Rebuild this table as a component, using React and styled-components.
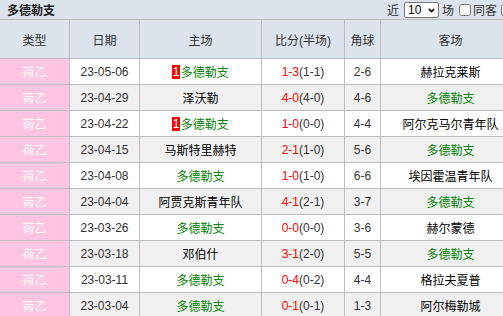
import React from 'react';
import styled, { createGlobalStyle } from 'styled-components';
import { ChevronDown } from 'lucide-react';

const GlobalStyle = createGlobalStyle`
  html, body {
    margin: 0;
    padding: 0;
    background: #fff;
    overflow: hidden;
  }
  body {
    font-family: "Liberation Sans", "Noto Sans CJK SC", sans-serif;
    font-size: 12px;
    color: #333;
  }
`;

const Wrap = styled.div`
  width: 520px;
`;

const TitleBar = styled.div`
  display: flex;
  align-items: center;
  height: 19px;
  background: #dce3ec;
  border-bottom: 1px solid #bdbdbd;
  white-space: nowrap;
`;

const Title = styled.div`
  flex: 0 0 380px;
  padding-left: 7px;
  font-weight: bold;
  font-size: 12px;
  color: #222;
`;

const Filters = styled.div`
  display: flex;
  align-items: center;
  color: #333;
`;

const Label = styled.span`
  margin-right: ${(p) => p.$gap || 0}px;
`;

const SelectBox = styled.div`
  position: relative;
  margin-right: 3px;
  height: 16px;

  svg {
    position: absolute;
    right: 3px;
    top: 4px;
    pointer-events: none;
  }
`;

const Select = styled.select`
  appearance: none;
  height: 16px;
  width: 35px;
  padding: 0 0 0 3px;
  font-family: "Liberation Sans", sans-serif;
  font-size: 12px;
  border: 1px solid #767676;
  border-radius: 2px;
  background: #fff;
  color: #000;
`;

const Check = styled.input`
  width: 12px;
  height: 12px;
  margin: 0 ${(p) => p.$gap || 0}px 0 0;
`;

const Row = styled.div`
  display: grid;
  grid-template-columns: 70px 70px 122px 83px 36px 139px;
  height: ${(p) => (p.$head ? 39 : 26)}px;
  background: ${(p) => (p.$head ? '#dce3ec' : p.$alt ? '#f0f0f0' : '#fff')};
`;

const Cell = styled.div`
  display: flex;
  align-items: center;
  justify-content: center;
  box-sizing: border-box;
  border-right: 1px solid #bdbdbd;
  border-bottom: 1px solid #bdbdbd;
  white-space: nowrap;
  overflow: hidden;
  color: ${(p) => p.$color || '#333'};

  &:last-child {
    border-right: none;
  }
`;

const TypeCell = styled(Cell)`
  background: #ffc4e1;
  color: #fff;
`;

const Rank = styled.span`
  display: inline-block;
  background: #f00;
  color: #fff;
  line-height: 14px;
  padding: 0 0.5px;
  margin-right: 1px;
`;

const Red = styled.span`
  color: #f00;
`;

const TEAM = '多德勒支';

const matches = [
  ['23-05-06', TEAM, '1-3', '1-1', '2-6', '赫拉克莱斯', 1],
  ['23-04-29', '泽沃勒', '4-0', '4-0', '4-6', TEAM],
  ['23-04-22', TEAM, '1-0', '0-0', '4-4', '阿尔克马尔青年队', 1],
  ['23-04-15', '马斯特里赫特', '2-1', '1-0', '5-6', TEAM],
  ['23-04-08', TEAM, '1-0', '1-0', '6-6', '埃因霍温青年队'],
  ['23-04-04', '阿贾克斯青年队', '4-1', '2-1', '3-7', TEAM],
  ['23-03-26', TEAM, '0-0', '0-0', '3-6', '赫尔蒙德'],
  ['23-03-18', '邓伯什', '3-1', '2-0', '5-5', TEAM],
  ['23-03-11', TEAM, '0-4', '0-2', '4-4', '格拉夫夏普'],
  ['23-03-04', TEAM, '0-1', '0-1', '1-3', '阿尔梅勒城'],
];

const teamColor = (name) => (name === TEAM ? '#008000' : '#000');

export default function App() {
  return (
    <Wrap>
      <GlobalStyle />
      <TitleBar>
        <Title>{TEAM}</Title>
        <Filters>
          <Label $gap={5}>近</Label>
          <SelectBox>
            <Select defaultValue="10">
              <option value="6">6</option>
              <option value="10">10</option>
              <option value="20">20</option>
            </Select>
            <ChevronDown size={9} strokeWidth={4} color="#000" />
          </SelectBox>
          <Label $gap={5}>场</Label>
          <Check type="checkbox" $gap={2} />
          <Label $gap={4}>同客</Label>
          <Check type="checkbox" />
        </Filters>
      </TitleBar>
      <Row $head>
        <Cell>类型</Cell>
        <Cell>日期</Cell>
        <Cell>主场</Cell>
        <Cell>比分(半场)</Cell>
        <Cell>角球</Cell>
        <Cell>客场</Cell>
      </Row>
      {matches.map(([date, home, score, half, corner, away, rank], i) => (
        <Row key={date} $alt={i % 2 === 1}>
          <TypeCell>荷乙</TypeCell>
          <Cell>{date}</Cell>
          <Cell $color={teamColor(home)}>
            {rank && <Rank>{rank}</Rank>}
            {home}
          </Cell>
          <Cell>
            <Red>{score}</Red>({half})
          </Cell>
          <Cell>{corner}</Cell>
          <Cell $color={teamColor(away)}>{away}</Cell>
        </Row>
      ))}
    </Wrap>
  );
}
